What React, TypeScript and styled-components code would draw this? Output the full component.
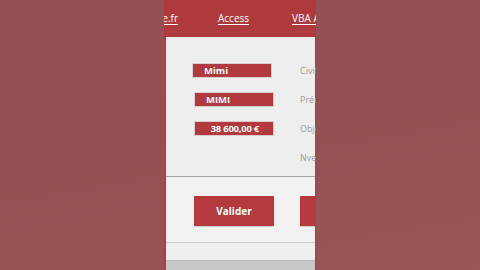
import React from "react";
import styled, { createGlobalStyle } from "styled-components";

const Global = createGlobalStyle`
  html, body { margin: 0; padding: 0; }
  body {
    width: 480px; height: 270px; overflow: hidden;
    font-family: "Open Sans", "Noto Sans", Arial, sans-serif;
  }
`;

const Page = styled.div`
  width: 480px;
  height: 270px;
  display: flex;
  justify-content: center;
  background: linear-gradient(170deg, #945153 0%, #935052 45%, #985556 100%);
`;

const Strip = styled.div`
  width: 152px;
  height: 270px;
  overflow: hidden;
  display: flex;
  flex-direction: column;
  background: #b43c40;
`;

const Header = styled.div`
  height: 37px;
  flex: none;
  display: flex;
  align-items: center;
  gap: 40px;
  background: #ae3a3d;
  padding-bottom: 1px;
  box-sizing: border-box;
`;

const LinkCell = styled.div<{ $w?: number; $shift?: number }>`
  width: ${(p) => (p.$w !== undefined ? `${p.$w}px` : "auto")};
  margin-left: ${(p) => p.$shift ?? 0}px;
  flex: none;
  display: flex;
  justify-content: flex-end;
  white-space: nowrap;
`;

const HeadLink = styled.span`
  color: #ffffff;
  font-size: 10px;
  text-decoration: underline;
  text-decoration-thickness: 1px;
  text-underline-offset: 2px;
  white-space: nowrap;
`;

const Panel = styled.div`
  flex: none;
  height: 140px;
  margin: 0 1px 0 2px;
  background: #eeeeee;
  padding-top: 19px;
  box-sizing: border-box;
  display: flex;
  flex-direction: column;
  border-bottom: 1px solid #a7a7a7;
`;

const Row = styled.div`
  height: 29px;
  display: flex;
  align-items: center;
`;

const Field = styled.div<{ $indent: number; $align: "left" | "right" }>`
  margin-left: ${(p) => p.$indent}px;
  width: 80px;
  height: 15px;
  box-sizing: border-box;
  background: #b23a3e;
  border: 1px solid #d9cfcf;
  color: #ffffff;
  font-weight: 700;
  font-size: 9.5px;
  line-height: 13px;
  letter-spacing: ${(p) => (p.$align === "left" ? "0" : "-0.25px")};
  display: flex;
  justify-content: ${(p) => (p.$align === "left" ? "flex-start" : "flex-end")};
  padding: ${(p) => (p.$align === "left" ? "0 0 0 11px" : "0 14px 0 0")};
  flex: none;
`;

const Label = styled.span<{ $indent: number }>`
  margin-left: ${(p) => p.$indent}px;
  color: #9c9c9c;
  font-size: 9px;
  white-space: nowrap;
`;

const ActionArea = styled.div`
  flex: none;
  height: 66px;
  margin: 0 1px 0 2px;
  background: #f2f2f2;
  display: flex;
  align-items: center;
  gap: 26px;
  padding-left: 28px;
  padding-top: 2px;
  box-sizing: border-box;
  border-bottom: 1px solid #cfcfcf;
`;

const Button = styled.div`
  width: 80px;
  height: 30px;
  flex: none;
  background: #b43a3e;
  border-radius: 1px;
  color: #ffffff;
  font-weight: 700;
  font-size: 10px;
  display: flex;
  align-items: center;
  justify-content: center;
  box-shadow: 0 1px 1px rgba(0, 0, 0, 0.15);
`;

const Footer = styled.div`
  flex: none;
  height: 17px;
  margin: 0 1px 0 2px;
  background: #efefef;
  border-bottom: 1px solid #bdbdbd;
`;

const Bottom = styled.div`
  flex: 1;
  margin: 0 1px 0 2px;
  background: #c8c8c8;
`;

const rows = [
  { value: "Mimi", indent: 26, align: "left" as const, label: "Civilité", labelIndent: 28 },
  { value: "MIMI", indent: 28, align: "left" as const, label: "Prénom", labelIndent: 26 },
  { value: "38 600,00 €", indent: 28, align: "right" as const, label: "Objectif", labelIndent: 26 },
  { value: null, indent: 0, align: "left" as const, label: "Nveau", labelIndent: 134 },
];

export default function App() {
  return (
    <>
      <Global />
      <Page>
        <Strip>
          <Header>
            <LinkCell $w={14}>
              <HeadLink>excel-facile.fr</HeadLink>
            </LinkCell>
            <LinkCell>
              <HeadLink>Access</HeadLink>
            </LinkCell>
            <LinkCell $shift={3}>
              <HeadLink>VBA Access</HeadLink>
            </LinkCell>
          </Header>
          <Panel>
            {rows.map((r, i) => (
              <Row key={i}>
                {r.value !== null && (
                  <Field $indent={r.indent} $align={r.align}>
                    {r.value}
                  </Field>
                )}
                <Label $indent={r.labelIndent}>{r.label}</Label>
              </Row>
            ))}
          </Panel>
          <ActionArea>
            <Button>Valider</Button>
            <Button>Annuler</Button>
          </ActionArea>
          <Footer />
          <Bottom />
        </Strip>
      </Page>
    </>
  );
}
